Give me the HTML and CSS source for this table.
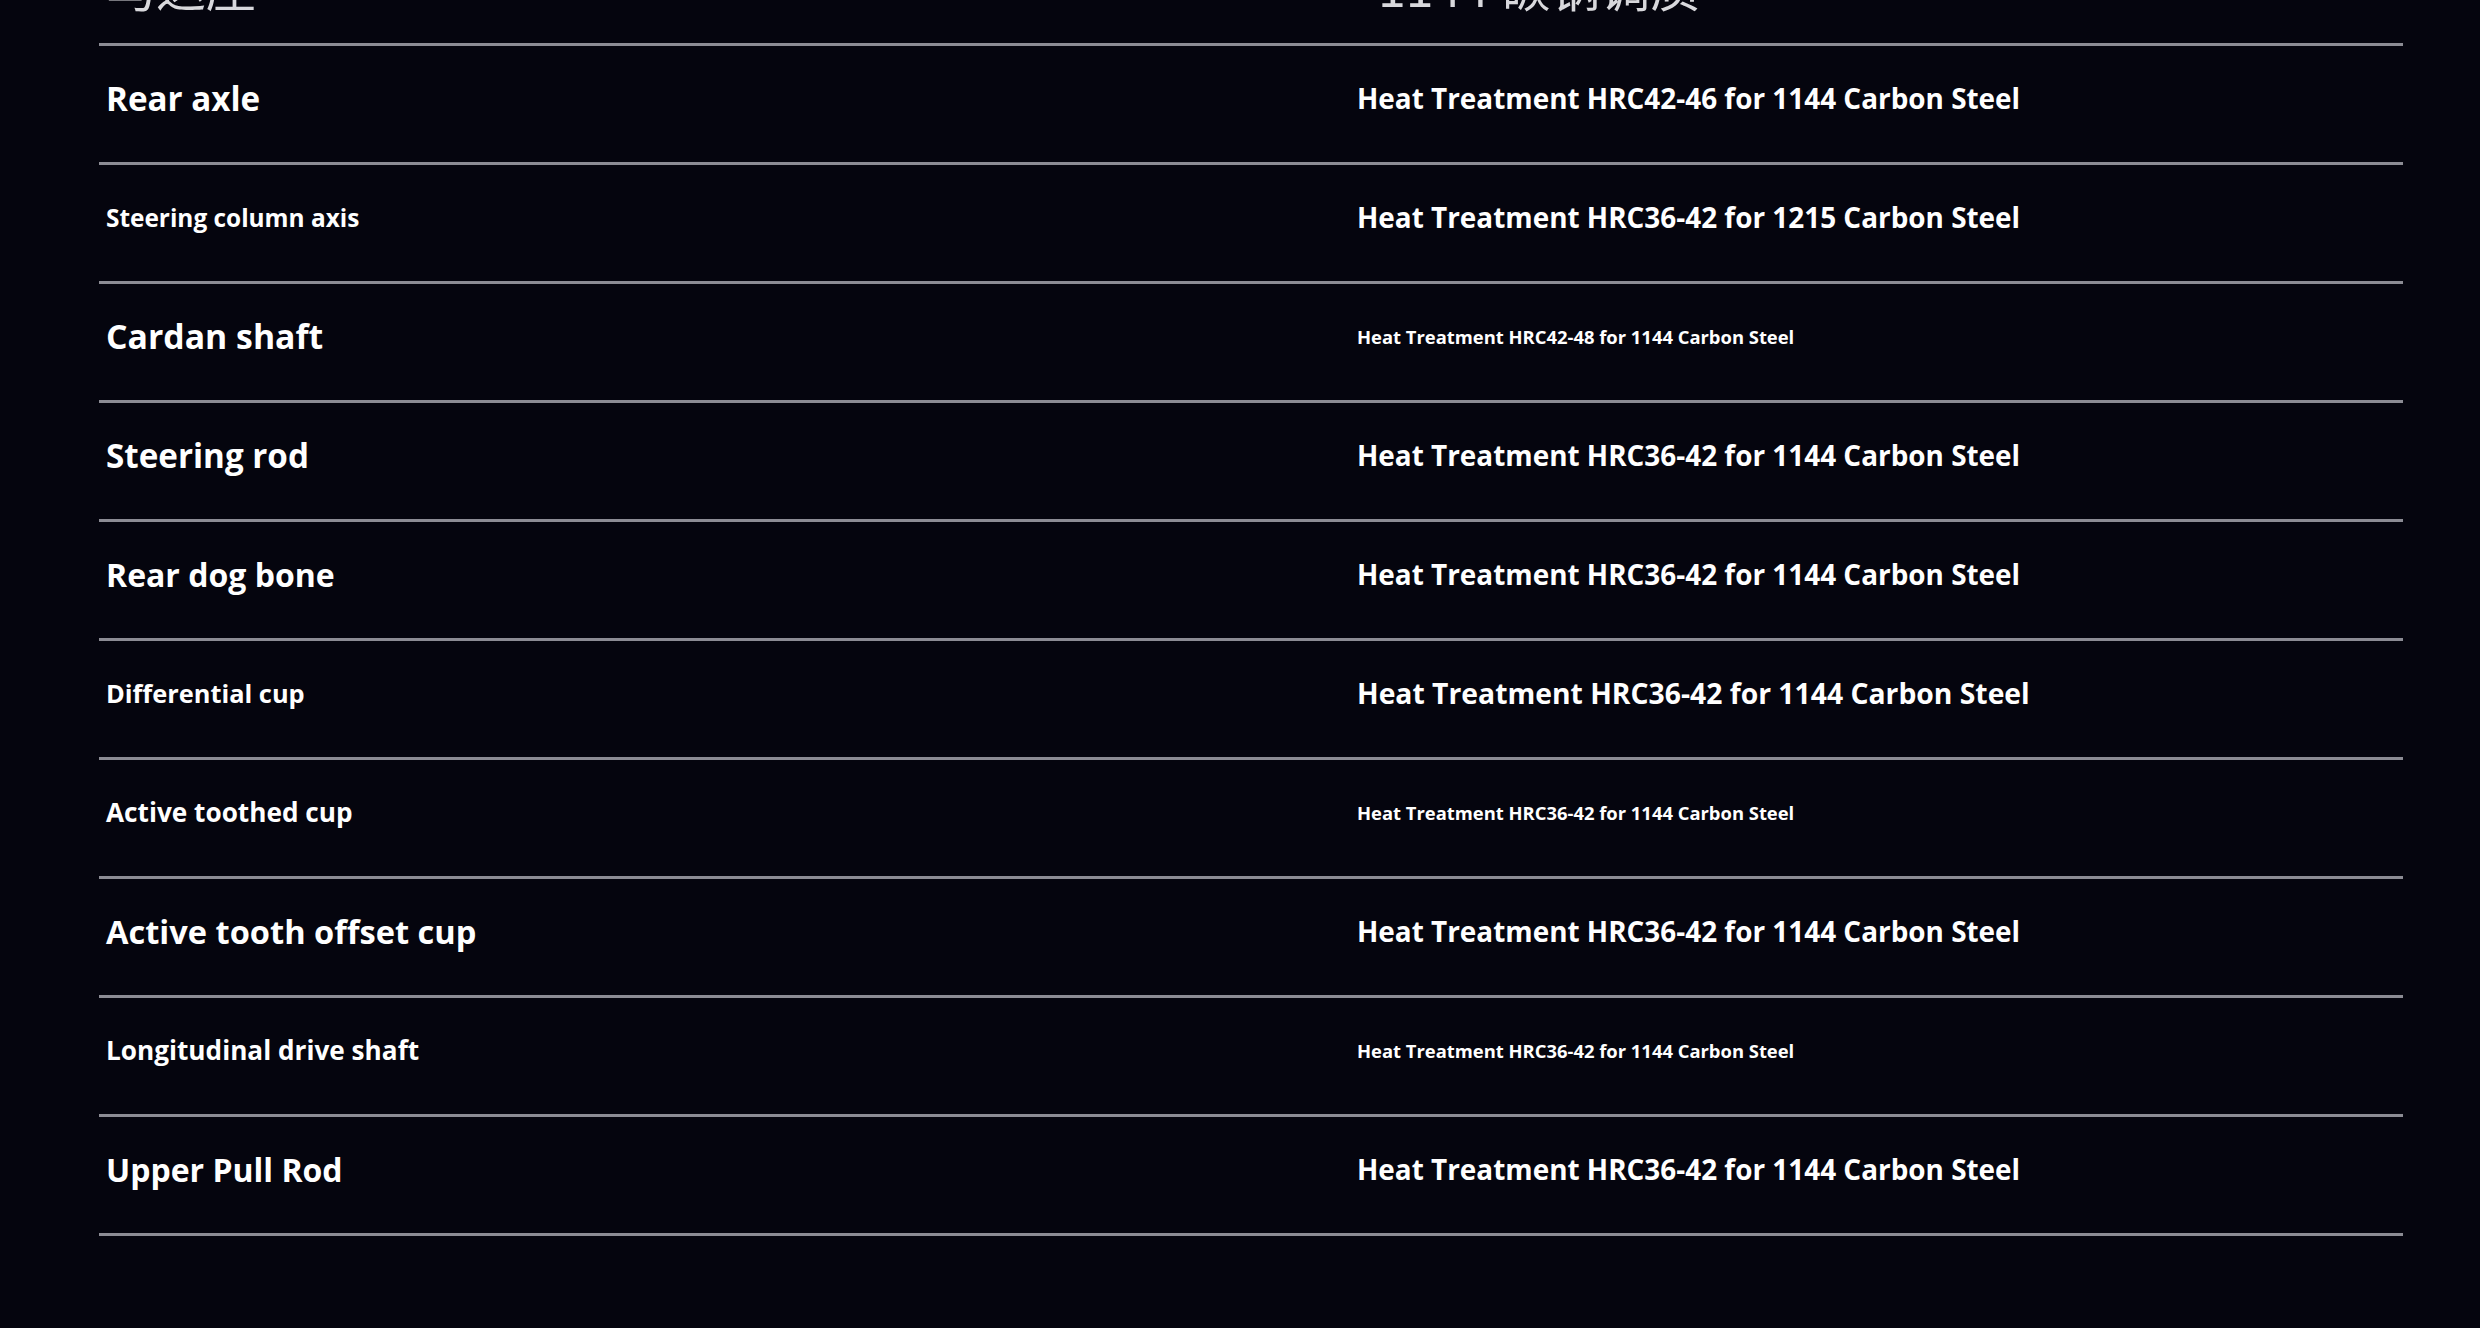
FILE: index.html
```html
<!DOCTYPE html>
<html lang="en">
<head>
<meta charset="utf-8">
<title>Parts and heat treatment</title>
<meta name="viewport" content="width=device-width, initial-scale=1">
<link rel="stylesheet" href="styles.css">
</head>
<body>
<main>
<div class="spec">
<div class="row top">
<div class="part cn">马达座</div>
<div class="treat cn">1144 碳钢调质</div>
</div>
<div class="row">
<div class="part s33">Rear axle</div>
<div class="treat">Heat Treatment HRC42-46 for 1144 Carbon Steel</div>
</div>
<div class="row">
<div class="part s24">Steering column axis</div>
<div class="treat">Heat Treatment HRC36-42 for 1215 Carbon Steel</div>
</div>
<div class="row">
<div class="part s34">Cardan shaft</div>
<div class="treat small">Heat Treatment HRC42-48 for 1144 Carbon Steel</div>
</div>
<div class="row">
<div class="part s33">Steering rod</div>
<div class="treat">Heat Treatment HRC36-42 for 1144 Carbon Steel</div>
</div>
<div class="row">
<div class="part s32">Rear dog bone</div>
<div class="treat">Heat Treatment HRC36-42 for 1144 Carbon Steel</div>
</div>
<div class="row">
<div class="part s25">Differential cup</div>
<div class="treat big">Heat Treatment HRC36-42 for 1144 Carbon Steel</div>
</div>
<div class="row">
<div class="part s26">Active toothed cup</div>
<div class="treat small">Heat Treatment HRC36-42 for 1144 Carbon Steel</div>
</div>
<div class="row">
<div class="part s32b">Active tooth offset cup</div>
<div class="treat">Heat Treatment HRC36-42 for 1144 Carbon Steel</div>
</div>
<div class="row">
<div class="part s26">Longitudinal drive shaft</div>
<div class="treat small">Heat Treatment HRC36-42 for 1144 Carbon Steel</div>
</div>
<div class="row">
<div class="part s32">Upper Pull Rod</div>
<div class="treat">Heat Treatment HRC36-42 for 1144 Carbon Steel</div>
</div>
</div>
</main>
</body>
</html>
```

FILE: styles.css
```css
html,body{margin:0;padding:0;}
body{background-color:#05050e;color:#ffffff;font-family:"Open Sans","Noto Sans",sans-serif;font-weight:700;overflow:hidden;}
.spec{width:2304px;margin:-73px 0 0 99px;}
.row{display:grid;grid-template-columns:1251px 1fr;align-items:center;height:104px;border-bottom:3px solid #8c8c94;padding-bottom:12px;box-sizing:content-box;}
.row.top{height:116px;padding-bottom:0;}
.row .part{padding-left:7px;white-space:nowrap;}
.row .treat{padding-left:7px;font-size:27.9px;white-space:nowrap;}
.row .treat.small{font-size:18.4px;}
.row .treat.big{font-size:28.3px;}
.cn{font-family:"Noto Sans CJK SC",sans-serif;font-weight:400;font-size:50px;color:#d8d8dc;}
.row .treat.cn{font-size:50px;padding-left:28px;}
.s24{font-size:24.4px;}
.s25{font-size:25.4px;}
.s26{font-size:26.2px;}
.s32{font-size:32px;}
.s32b{font-size:32.6px;}
.s33{font-size:33.2px;}
.s34{font-size:33.8px;}
```
